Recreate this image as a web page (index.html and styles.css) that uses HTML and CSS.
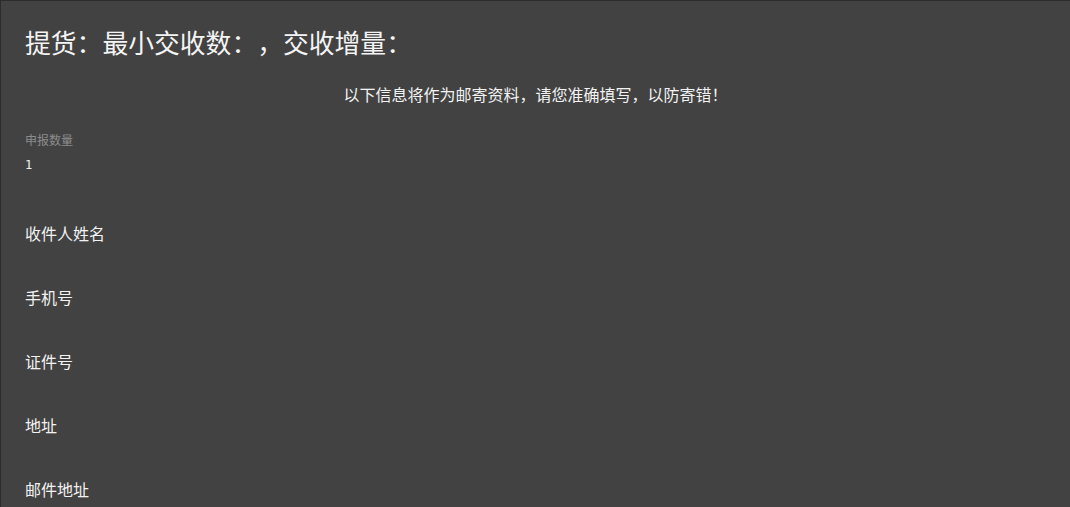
FILE: index.html
```html
<!DOCTYPE html>
<html lang="zh-CN">
<head>
<meta charset="utf-8">
<title>提货</title>
<link rel="stylesheet" href="styles.css">
</head>
<body>
<div class="page">
  <h1 class="title">提货：最小交收数：，交收增量：</h1>
  <p class="notice">以下信息将作为邮寄资料，请您准确填写，以防寄错！</p>
  <div class="qty">
    <div class="qty-label">申报数量</div>
    <div class="qty-value">1</div>
  </div>
  <div class="fields">
    <div class="field">收件人姓名</div>
    <div class="field">手机号</div>
    <div class="field">证件号</div>
    <div class="field">地址</div>
    <div class="field">邮件地址</div>
  </div>
</div>
</body>
</html>
```

FILE: styles.css
```css
html, body {
  margin: 0;
  padding: 0;
}
body {
  background: #424242;
  border-top: 1px solid #2c2c2c;
  border-left: 1px solid #2c2c2c;
  height: 506px;
  overflow: hidden;
  color: #f2f2f2;
  font-family: "Noto Sans CJK SC", "Noto Sans", sans-serif;
  text-spacing-trim: space-all;
  font-feature-settings: "halt" 0, "chws" 0;
}
.page {
  padding: 0 24px;
  display: flex;
  flex-direction: column;
}
.title {
  margin: 25px 0 0;
  font-size: 25.8px;
  line-height: 31px;
  font-weight: 400;
  color: #f4f4f4;
}
.notice {
  margin: 27px 0 0;
  font-size: 16px;
  line-height: 20px;
  text-align: center;
  color: #f2f2f2;
}
.qty {
  margin-top: 28px;
  display: flex;
  flex-direction: column;
  gap: 9px;
}
.qty-label {
  font-size: 12px;
  line-height: 16px;
  color: #8c8c8c;
}
.qty-value {
  font-size: 12px;
  line-height: 16px;
  color: #f2f2f2;
  font-family: "DejaVu Sans Mono", monospace;
}
.fields {
  margin-top: 50px;
  display: flex;
  flex-direction: column;
  gap: 44px;
}
.field {
  font-size: 16px;
  line-height: 20px;
  color: #f2f2f2;
}
```
